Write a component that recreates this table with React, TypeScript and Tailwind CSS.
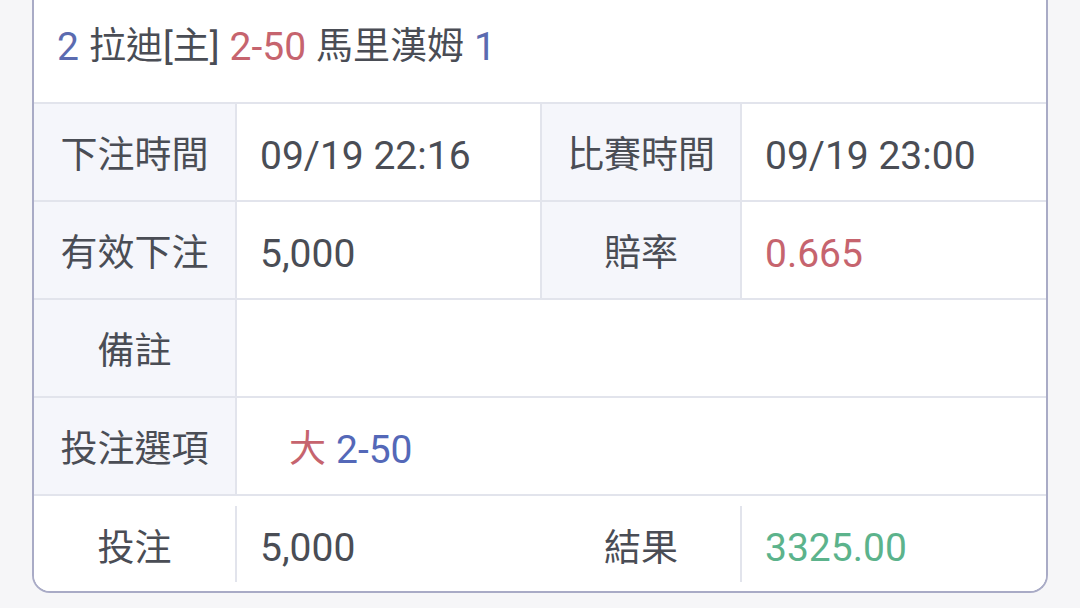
export default function App() {
  const font = { fontFamily: 'Roboto, "Noto Sans CJK TC", sans-serif' };
  const label = "flex items-center justify-center pt-[8px] bg-[#f5f6fb] text-[37px] text-[#4a4d55]";
  const value = "flex items-center pt-[8px] pl-[23px] text-[39px] text-[#4a4d55] bg-white";
  const line = "bg-[#e2e4ec]";

  return (
    <div className="min-h-screen w-full bg-[#f6f6f8] px-[32px]" style={font}>
      <div className="w-[1016px] overflow-hidden rounded-b-[18px] border-x-2 border-b-2 border-[#a9abc6] bg-white">
        <div className="flex h-[102px] items-center pb-[8px] pl-[23px] text-[37px] text-[#4a4d55]">
          <span className="text-[#5b6bb0] text-[39px]">2</span>
          <span className="ml-[10px]">拉迪[主]</span>
          <span className="ml-[10px] text-[39px] text-[#c6646e]">2-50</span>
          <span className="ml-[10px]">馬里漢姆</span>
          <span className="ml-[10px] text-[39px] text-[#5b6bb0]">1</span>
        </div>
        <div className={`h-[2px] ${line}`} />

        <div className={`grid grid-cols-[201px_303px_198px_1fr] gap-[2px] ${line}`}>
          <div className={`${label} h-[96px]`}>下注時間</div>
          <div className={value}>09/19 22:16</div>
          <div className={label}>比賽時間</div>
          <div className={value}>09/19 23:00</div>

          <div className={`${label} h-[96px]`}>有效下注</div>
          <div className={value}>5,000</div>
          <div className={label}>賠率</div>
          <div className={`${value} text-[#c6646e]`}>0.665</div>

          <div className={`${label} h-[96px]`}>備註</div>
          <div className={`${value} col-span-3`}></div>

          <div className={`${label} h-[96px]`}>投注選項</div>
          <div className={`${value} col-span-3 pl-[52px]`}>
            <span className="text-[37px] text-[#c6646e]">大</span>
            <span className="ml-[10px] text-[#5468b8]">2-50</span>
          </div>
        </div>
        <div className={`h-[2px] ${line}`} />

        <div className="flex h-[95px] items-center bg-white">
          <div className="flex w-[201px] items-center justify-center pt-[10px] text-[37px] text-[#4a4d55]">投注</div>
          <div className={`h-[76px] w-[2px] ${line}`} />
          <div className="flex w-[305px] items-center pt-[10px] pl-[23px] text-[39px] text-[#4a4d55]">5,000</div>
          <div className="flex w-[198px] items-center justify-center pt-[10px] text-[37px] text-[#4a4d55]">結果</div>
          <div className={`h-[76px] w-[2px] ${line}`} />
          <div className="flex flex-1 items-center pt-[10px] pl-[23px] text-[39px] text-[#5cb38c]">3325.00</div>
        </div>
      </div>
    </div>
  );
}
